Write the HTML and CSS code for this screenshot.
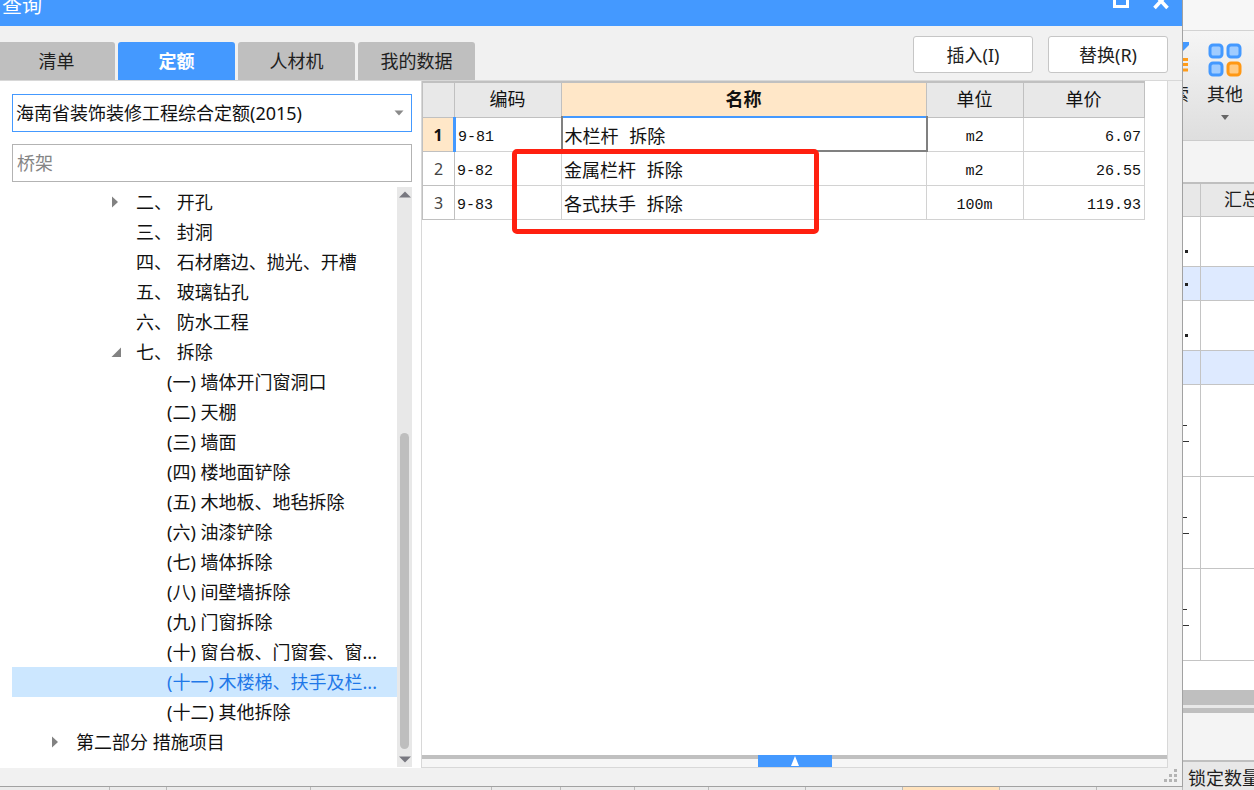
FILE: index.html
```html
<!DOCTYPE html>
<html lang="zh-CN">
<head>
<meta charset="utf-8">
<title>查询</title>
<link rel="stylesheet" href="styles.css">
</head>
<body>
<main class="screen">
  <section class="dialog-side">
    <div class="dialog">
      <header class="titlebar">
        <h1>查询</h1>
        <div class="window-buttons">
          <button type="button" aria-label="最大化"><svg width="16" height="10" viewBox="0 0 16 10"><path d="M1.5 -7H14.5V6.5H1.5Z" fill="none" stroke="#fff" stroke-width="3"/></svg></button>
          <button type="button" aria-label="关闭"><svg width="16" height="10" viewBox="0 0 16 10"><path d="M1.5 8L14.5 -6M14.5 8L1.5 -6" fill="none" stroke="#fff" stroke-width="3.6"/></svg></button>
        </div>
      </header>
      <div class="toolbar">
        <nav class="tabs">
          <button type="button" class="tab">清单</button>
          <button type="button" class="tab active">定额</button>
          <button type="button" class="tab">人材机</button>
          <button type="button" class="tab">我的数据</button>
        </nav>
        <div class="actions">
          <button type="button" class="action">插入(I)</button>
          <button type="button" class="action">替换(R)</button>
        </div>
      </div>
      <div class="content">
        <aside class="side">
          <div class="combo">
            <select class="field library" aria-label="定额库"><option>海南省装饰装修工程综合定额(2015)</option></select>
            <svg class="combo-arrow" width="10" height="6" viewBox="0 0 10 6"><path d="M0.5 0.5H9.5L5 5.5Z" fill="#8a8a8a"/></svg>
          </div>
          <input class="field search" type="text" placeholder="桥架" aria-label="搜索">
          <div class="tree-area">
            <ul class="tree">
              <li class="l2"><svg class="twist" width="10" height="12" viewBox="0 0 10 12"><path d="M1 0.5L7 6L1 11.5Z" fill="#828282"/></svg>二、 开孔</li>
              <li class="l2">三、 封洞</li>
              <li class="l2">四、 石材磨边、抛光、开槽</li>
              <li class="l2">五、 玻璃钻孔</li>
              <li class="l2">六、 防水工程</li>
              <li class="l2"><svg class="twist" width="10" height="12" viewBox="0 0 10 12"><path d="M10 1.5V11H0.5Z" fill="#828282"/></svg>七、 拆除</li>
              <li class="l3">(一) 墙体开门窗洞口</li>
              <li class="l3">(二) 天棚</li>
              <li class="l3">(三) 墙面</li>
              <li class="l3">(四) 楼地面铲除</li>
              <li class="l3">(五) 木地板、地毡拆除</li>
              <li class="l3">(六) 油漆铲除</li>
              <li class="l3">(七) 墙体拆除</li>
              <li class="l3">(八) 间壁墙拆除</li>
              <li class="l3">(九) 门窗拆除</li>
              <li class="l3">(十) 窗台板、门窗套、窗...</li>
              <li class="l3 selected">(十一) 木楼梯、扶手及栏...</li>
              <li class="l3">(十二) 其他拆除</li>
              <li class="l1"><svg class="twist" width="10" height="12" viewBox="0 0 10 12"><path d="M1 0.5L7 6L1 11.5Z" fill="#828282"/></svg>第二部分 措施项目</li>
            </ul>
            <div class="scrollbar">
              <svg width="12" height="7" viewBox="0 0 12 7"><path d="M0 6.5H12L6 0.5Z" fill="#787880"/></svg>
              <div class="track"><div class="thumb"></div></div>
              <svg width="12" height="7" viewBox="0 0 12 7"><path d="M0 0.5H12L6 6.5Z" fill="#787880"/></svg>
            </div>
          </div>
        </aside>
        <section class="results">
          <div class="table-area">
            <table class="quota">
              <colgroup><col class="c-index"><col class="c-code"><col><col class="c-unit"><col class="c-price"></colgroup>
              <thead><tr><th></th><th>编码</th><th class="current">名称</th><th>单位</th><th>单价</th></tr></thead>
              <tbody>
                <tr><th class="current index-current">1</th><td>9-81</td><td class="focus">木栏杆 拆除</td><td class="unit">m2</td><td class="price">6.07</td></tr>
                <tr><th>2</th><td>9-82</td><td>金属栏杆 拆除</td><td class="unit">m2</td><td class="price">26.55</td></tr>
                <tr><th>3</th><td>9-83</td><td>各式扶手 拆除</td><td class="unit">100m</td><td class="price">119.93</td></tr>
              </tbody>
            </table>
            <div class="marker"></div>
          </div>
          <div class="splitter">
            <button type="button" class="expand" aria-label="展开"><svg width="8" height="10" viewBox="0 0 8 10"><path d="M4 0L8 10H0Z" fill="#fff"/></svg></button>
          </div>
        </section>
      </div>
      <footer class="statusbar">
        <svg width="13" height="13" viewBox="0 0 13 13" fill="#b4b4b4"><path d="M10 0h3v3h-3zM10 5h3v3h-3zM5 5h3v3H5zM10 10h3v3h-3zM5 10h3v3H5zM0 10h3v3H0z"/></svg>
      </footer>
    </div>
    <div class="under">
      <i class="u110"></i><i class="u57"></i><i class="u144"></i><i class="u181"></i><i class="u69"></i><i class="u74"></i><i class="u74"></i><i class="u97"></i><i class="u97"></i><i class="u97 warm"></i><i class="u97"></i><i class="rest"></i>
    </div>
  </section>

  <section class="app">
    <div class="app-top"></div>
    <div class="ribbon">
      <button type="button" class="tool cut">
        <svg width="36" height="36" viewBox="0 0 36 36"><path d="M22 0H36V3L30 9H22Z" fill="#4499ff"/><path d="M22 17.5H35M22 22.5H35M22 28H35" stroke="#ff9c1a" stroke-width="3"/></svg>
        <span>查索</span>
      </button>
      <button type="button" class="tool">
        <svg width="36" height="36" viewBox="0 0 36 36" stroke-width="3"><g fill="#a0ccff" stroke="#4499ff"><rect x="3" y="3" width="12" height="12" rx="3"/><rect x="21" y="3" width="12" height="12" rx="3"/><rect x="3" y="21" width="12" height="12" rx="3"/></g><rect x="21" y="21" width="12" height="12" rx="3" fill="#ffcb85" stroke="#ff9814"/></svg>
        <span>其他</span>
        <svg width="8" height="5" viewBox="0 0 8 5"><path d="M0 0H8L4 5Z" fill="#666"/></svg>
      </button>
    </div>
    <div class="app-band"></div>
    <div class="grid-head"><span></span><span class="sum">汇总</span></div>
    <div class="grid-row tall"><span class="dot"></span><span></span></div>
    <div class="grid-row blue"><span class="dot"></span><span></span></div>
    <div class="grid-row tall"><span class="dot"></span><span></span></div>
    <div class="grid-row blue"><span></span><span></span></div>
    <div class="grid-row large"><span class="dash"></span><span></span></div>
    <div class="grid-row large"><span class="dash"></span><span></span></div>
    <div class="grid-row large"><span class="dash"></span><span></span></div>
    <div class="grid-space"></div>
    <div class="hscroll"></div>
    <div class="hsplit"></div>
    <div class="lower"></div>
    <div class="lower-head">锁定数量</div>
  </section>
</main>
</body>
</html>
```
FILE: styles.css
```css
* { box-sizing: border-box; }
body {
  margin: 0;
  font: 18px/30px "Noto Sans", "Noto Sans CJK SC", sans-serif;
  color: #1e1e1e;
  background: #f0f0f0;
}
button { font: inherit; color: inherit; border: 0; padding: 0; background: none; }
svg { display: block; flex: none; }

.screen { display: flex; height: 100vh; min-height: 640px; overflow: hidden; }
.dialog-side { flex: 1; min-width: 0; display: flex; flex-direction: column; }
.dialog {
  flex: 1;
  min-height: 0;
  display: flex;
  flex-direction: column;
  background: #f1f1f1;
  border-right: 1px solid #a2a2a2;
  border-bottom: 1px solid #a2a2a2;
}

.titlebar {
  flex: none;
  display: flex;
  justify-content: space-between;
  align-items: flex-start;
  height: 26px;
  padding: 0 13px 0 2px;
  overflow: hidden;
  background: #4499ff;
  color: #fff;
}
.titlebar h1 { margin: 0; font-size: 20px; font-weight: 400; line-height: 12px; }
.window-buttons { display: flex; gap: 24px; }

.toolbar {
  flex: none;
  display: flex;
  justify-content: space-between;
  align-items: flex-end;
  height: 55px;
  padding-right: 14px;
  border-bottom: 1px solid #d8d8d8;
}
.tabs { display: flex; gap: 3px; margin-left: -2px; }
.tab {
  width: 117px;
  height: 38px;
  border-radius: 3px 3px 0 0;
  background: #bfbfbf;
}
.tab.active { background: #4499ff; color: #fff; font-weight: 700; }
.actions { display: flex; gap: 15px; padding-bottom: 7px; }
.action {
  width: 120px;
  height: 37px;
  border: 1px solid #c6c6c6;
  border-radius: 3px;
  background: #fff;
}

.content { flex: 1; min-height: 0; display: flex; }
.side {
  flex: none;
  display: flex;
  flex-direction: column;
  width: 421px;
  padding: 13px 9px 1px 12px;
  background: #fff;
}
.combo { display: grid; align-items: center; }
.combo > * { grid-area: 1 / 1; }
.combo-arrow { justify-self: end; margin-right: 8px; pointer-events: none; }
.field {
  width: 100%;
  height: 38px;
  margin: 0;
  padding: 0 4px;
  border: 1px solid #b3b3b3;
  border-radius: 0;
  background: #fff;
  font: inherit;
  color: #111;
  appearance: none;
  outline: 0;
}
.library { padding: 0 3px; border-color: #4499ff; }
.search { flex: none; margin-top: 12px; }
.search::placeholder { color: #858585; opacity: 1; }

.tree-area { flex: 1; min-height: 0; display: flex; margin-top: 5px; }
.tree { flex: 1; min-width: 0; margin: 0; padding: 0; list-style: none; overflow: hidden; }
.tree li { display: flex; align-items: center; height: 30px; white-space: nowrap; color: #111; }
.twist { width: 10px; margin-right: 15px; }
.l1 { padding-left: 39px; }
.l2 { padding-left: 124px; }
.l2:has(.twist) { padding-left: 99px; }
.l3 { padding-left: 155px; }
.tree .selected { background: #cce7ff; color: #1f78e8; }

.scrollbar {
  flex: none;
  display: flex;
  flex-direction: column;
  align-items: center;
  gap: 6px;
  width: 15px;
  padding: 4px 0;
  background: #e8e8e8;
}
.track { flex: 1; display: flex; flex-direction: column; justify-content: flex-end; padding-bottom: 1px; }
.thumb { width: 9px; height: 58%; border-radius: 5px; background: #bebebe; }

.results {
  flex: 1;
  min-width: 0;
  display: flex;
  flex-direction: column;
  margin-right: 14px;
  border: solid #d8d8d8;
  border-width: 0 1px 1px;
  background: #fff;
}
.table-area { flex: 1; min-height: 0; position: relative; padding-right: 22px; }
.quota {
  width: 100%;
  table-layout: fixed;
  border-collapse: collapse;
  font: 18px/24px "Noto Sans CJK SC", sans-serif;
  color: #111;
}
.c-index { width: 32px; }
.c-code { width: 107px; }
.c-unit { width: 97px; }
.c-price { width: 121px; }
.quota th, .quota td { height: 34px; padding: 0 3px 0 2px; border: 1px solid #d2d2d2; white-space: nowrap; }
.quota th { border-color: #c0c0c0; font-weight: 400; text-align: center; }
.quota thead th { height: 35px; padding-bottom: 3px; background: #e8e8e8; border-top-width: 2px; }
.quota thead .current { background: #ffe7c8; font-weight: 700; }
.quota tbody th { padding: 2px 0 0; font-family: "Noto Sans", sans-serif; font-size: 16px; color: #444; }
.quota tbody .index-current { background: #ffe7c8; color: #111; font-weight: 700; border-right: 3px solid #4499ff; }
.quota tbody td { padding-top: 7px; font-family: "Liberation Mono", "Noto Sans CJK SC", monospace; line-height: 24px; }
.quota td:nth-child(2), .quota .unit, .quota .price { font-size: 15px; }
.quota .unit { text-align: center; }
.quota .price { text-align: right; }
.quota tbody .focus { border: 2px solid #808080; border-top: 2px solid #4499ff; }

.marker {
  position: absolute;
  left: 90px;
  top: 68px;
  width: 307px;
  height: 85px;
  border: 5px solid #ff2010;
  border-radius: 5px;
}
.splitter {
  flex: none;
  display: flex;
  justify-content: center;
  height: 12px;
  border-top: 4px solid #c0c0c0;
  background: #f6f6f6;
}
.expand {
  display: flex;
  justify-content: center;
  align-items: center;
  width: 74px;
  height: 12px;
  margin-top: -4px;
  background: #4499ff;
}
.statusbar { flex: none; display: flex; justify-content: flex-end; height: 18px; padding: 1px 5px 0 0; }

.under { flex: none; display: flex; height: 3px; background: #ebebeb; }
.under i { flex: none; border-right: 1px solid #bbb; }
.under .rest { flex: 1; }
.u57 { width: 57px; }
.u69 { width: 69px; }
.u74 { width: 74px; }
.u97 { width: 97px; }
.u110 { width: 110px; }
.u144 { width: 144px; }
.u181 { width: 181px; }
.under .warm { background: #ffe2bc; }

.app { flex: none; display: flex; flex-direction: column; width: 71px; overflow: hidden; background: #fff; }
.app > div { flex: none; }
.app-top { height: 31px; background: #f7f7f7; border-bottom: 1px solid #d2d2d2; }
.ribbon {
  display: flex;
  gap: 18px;
  height: 110px;
  padding-top: 11px;
  background: linear-gradient(#f5f5f5, #dedede);
  border-bottom: 1px solid #ccc;
}
.tool { display: flex; flex-direction: column; align-items: center; width: 36px; line-height: 30px; white-space: nowrap; }
.tool span { margin: 1px 0 6px; }
.cut { width: 6px; align-items: flex-end; overflow: hidden; }
.app-band { height: 41px; background: #f4f4f4; }
.grid-head { display: flex; height: 35px; border-top: 2px solid #bfbfbf; border-bottom: 1px solid #c4c4c4; background: #e8e8e8; }
.grid-head span, .grid-row span { flex: 1; white-space: nowrap; }
.grid-head span:first-child, .grid-row span:first-child { flex: none; width: 18px; border-right: 1px solid #c4c4c4; }
.grid-head .sum { padding-left: 23px; }
.grid-row { display: flex; height: 34px; border-bottom: 1px solid #c4c4c4; }
.tall { height: 50px; }
.large { height: 92px; }
.blue { background: #deeaff; }
.dot::before { content: ""; display: block; width: 3px; height: 3px; margin: 16px 0 0 2px; background: #222; }
.tall .dot::before { margin-top: 33px; }
.dash::before { content: ""; display: block; width: 6px; height: 16px; margin-top: 40px; border-bottom: 1px solid #333; background: linear-gradient(#333, #333) 0 0 / 4px 1px no-repeat; }
.grid-space { height: 29px; }
.hscroll { height: 15px; background: #bfbfbf; }
.hsplit { height: 8px; border: solid #e8e8e8; border-width: 3px 0 0; background: #bfbfbf; }
.app > .lower { flex: 1; background: #f4f4f4; }
.lower-head { height: 30px; padding: 1px 0 0 5px; border-top: 2px solid #bfbfbf; background: #e8e8e8; white-space: nowrap; }
```
